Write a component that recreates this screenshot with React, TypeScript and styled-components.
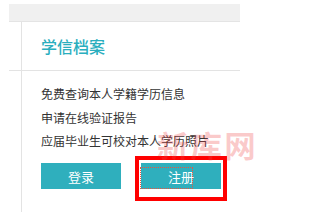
import React from "react";
import styled, { createGlobalStyle } from "styled-components";

const Global = createGlobalStyle`
  html, body { margin: 0; padding: 0; background: #fff; }
  body { font-family: "Noto Sans CJK SC", "Noto Sans", sans-serif; }
`;

const Page = styled.div`
  position: relative;
  width: 317px;
  height: 212px;
  overflow: hidden;
  padding: 4px 0 0 9px;
  box-sizing: border-box;
`;

const Card = styled.div`
  width: 231px;
  display: flex;
  flex-direction: column;
`;

const TopBar = styled.div`
  height: 17px;
  background: #f0f0f0;
  border-bottom: 1px solid #e4e4e4;
`;

const Body = styled.div`
  display: flex;
  flex-direction: column;
  height: 200px;
  background: linear-gradient(#e3e3e3, #e3e3e3) 12px 0 / 1px 100% no-repeat;
`;

const TitleRow = styled.div`
  height: 48px;
  border-bottom: 1px solid #e3e3e3;
  display: flex;
  align-items: center;
  padding-left: 32px;
`;

const Title = styled.h2`
  margin: 0;
  font-size: 16px;
  font-weight: 500;
  line-height: 1;
  color: #2aaebe;
`;

const List = styled.ul`
  list-style: none;
  margin: 0;
  padding: 11px 0 0 32px;
`;

const Item = styled.li`
  font-size: 12px;
  line-height: 23.5px;
  color: #333;
  white-space: nowrap;
`;

const Actions = styled.div`
  display: flex;
  gap: 20px;
  padding: 10.5px 0 0 32px;
`;

const ButtonWrap = styled.div`
  position: relative;
`;

const Button = styled.a`
  position: relative;
  display: flex;
  align-items: center;
  justify-content: center;
  width: 80px;
  height: 26px;
  background: #2fafbd;
  color: #fff;
  font-size: 13px;
  text-decoration: none;
`;

const FocusRing = styled.span`
  position: absolute;
  left: 0;
  top: 5px;
  width: 51px;
  height: 20px;
  outline: 1px dotted #e8553f;
`;

const Highlight = styled.div`
  position: absolute;
  left: -6px;
  top: -7px;
  width: 92px;
  height: 45px;
  box-sizing: border-box;
  border: 4px solid #f00;
  pointer-events: none;
`;

const Watermark = styled.div`
  position: absolute;
  left: 157px;
  top: 129px;
  font-size: 30px;
  line-height: 1;
  font-weight: 700;
  color: rgba(240, 70, 70, 0.28);
  letter-spacing: 2px;
  transform: scaleX(1.05);
  transform-origin: left top;
  white-space: nowrap;
  pointer-events: none;
`;

export default function App() {
  return (
    <>
      <Global />
      <Page>
        <Card>
          <TopBar />
          <Body>
            <TitleRow>
              <Title>学信档案</Title>
            </TitleRow>
            <List>
              <Item>免费查询本人学籍学历信息</Item>
              <Item>申请在线验证报告</Item>
              <Item>应届毕业生可校对本人学历照片</Item>
            </List>
            <Actions>
              <ButtonWrap>
                <Button href="#">登录</Button>
              </ButtonWrap>
              <ButtonWrap>
                <Button href="#">
                  <FocusRing />
                  注册
                </Button>
                <Highlight />
              </ButtonWrap>
            </Actions>
          </Body>
        </Card>
        <Watermark>新库网</Watermark>
      </Page>
    </>
  );
}
